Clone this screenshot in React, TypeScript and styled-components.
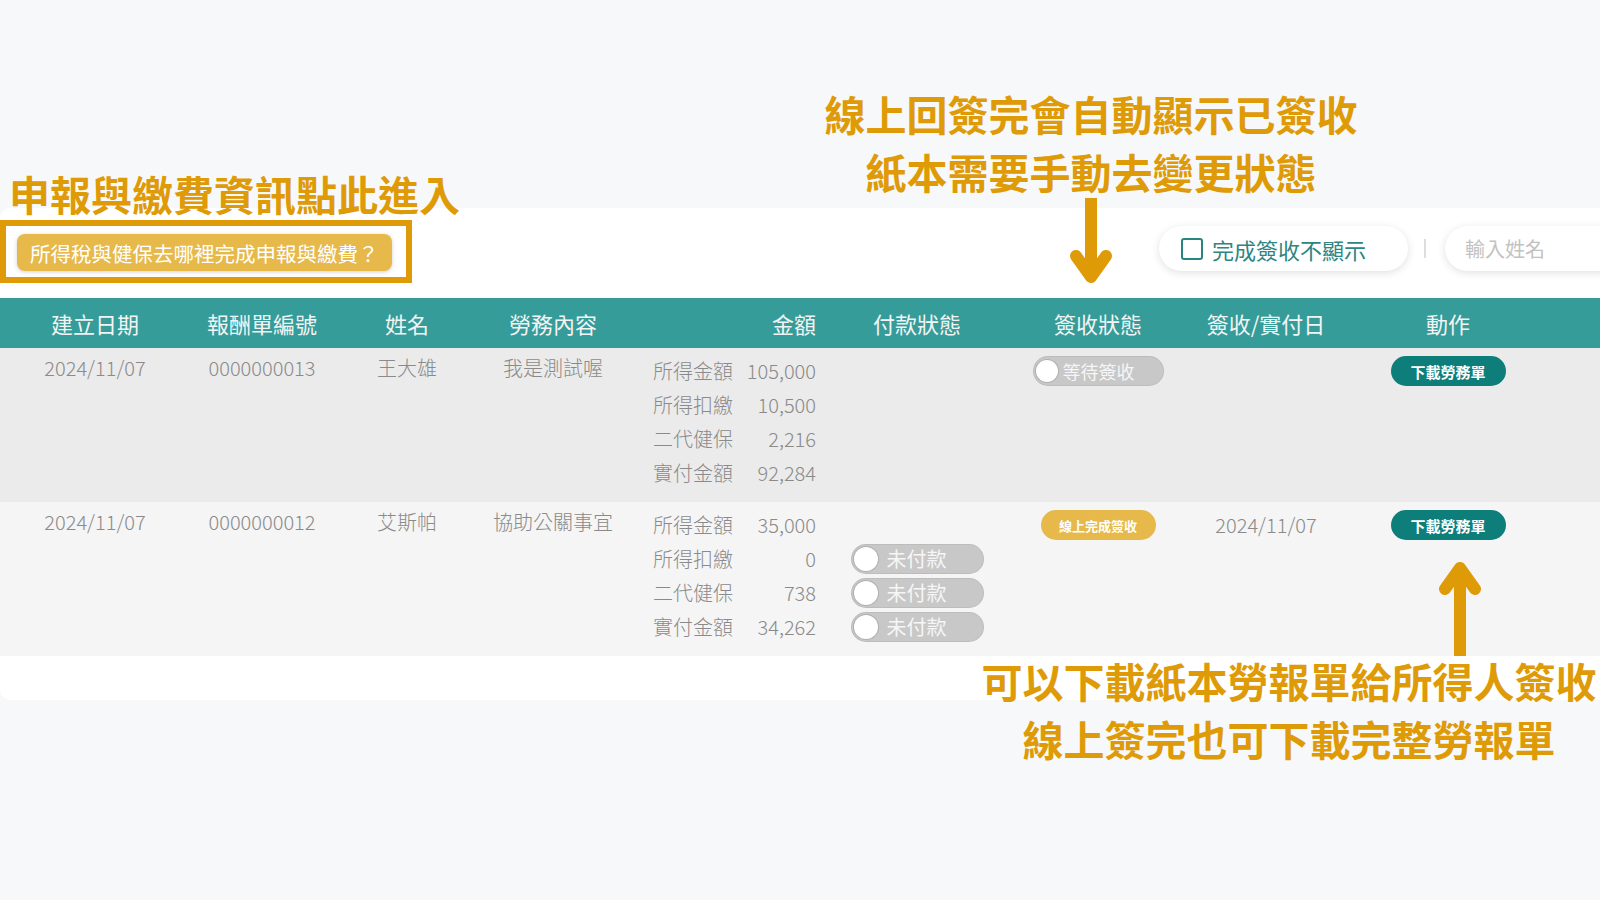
import React from "react";
import styled, { createGlobalStyle } from "styled-components";

const ORANGE = "#DE9B07";
const TEAL = "#369C99";
const DARK_TEAL = "#0D7E7A";
const GOLD = "#E6B94A";
const CJK = `"Noto Sans CJK TC", "Noto Sans", sans-serif`;

const GlobalStyle = createGlobalStyle`
  html, body { margin: 0; padding: 0; }
  body {
    background: #F7F8FA;
    font-family: ${CJK};
    overflow: hidden;
  }
`;

const Page = styled.div`
  position: relative;
  width: 1600px;
  height: 900px;
  overflow: hidden;
  padding-top: 208px;
  box-sizing: border-box;
`;

const Panel = styled.section`
  width: 1720px;
  background: #fff;
  border-radius: 10px 0 0 10px;
  padding-bottom: 44px;
`;

const TopBar = styled.div`
  display: flex;
  align-items: flex-start;
  height: 90px;
  padding: 0 15px 0 17px;
  box-sizing: border-box;
`;

const HelpWrap = styled.div`
  position: relative;
  margin-top: 26px;
  &::after {
    content: "";
    position: absolute;
    left: -17px;
    top: -14px;
    right: -20px;
    bottom: -12px;
    border: 6px solid ${ORANGE};
    pointer-events: none;
  }
`;

const HelpButton = styled.button`
  display: flex;
  align-items: center;
  width: 375px;
  height: 37px;
  padding: 0 0 0 13px;
  border: none;
  border-radius: 8px;
  background: ${GOLD};
  color: #fff;
  font-family: ${CJK};
  font-size: 20.5px;
  white-space: nowrap;
  box-shadow: 0 1px 4px rgba(0, 0, 0, 0.18);
  cursor: pointer;
`;

const RightGroup = styled.div`
  margin-left: auto;
  margin-top: 18px;
  display: flex;
  align-items: center;
`;

const CheckPill = styled.label`
  display: flex;
  align-items: center;
  gap: 9px;
  width: 249px;
  height: 45px;
  padding-left: 22px;
  box-sizing: border-box;
  border-radius: 23px;
  background: #fff;
  box-shadow: 0 2px 8px rgba(0, 0, 0, 0.12);
  color: #2E8581;
  font-size: 22px;
`;

const CheckBox = styled.span`
  width: 22px;
  height: 22px;
  border: 2px solid #2A8480;
  border-radius: 3px;
  box-sizing: border-box;
`;

const Divider = styled.span`
  width: 2px;
  height: 19px;
  background: #DDDDDD;
  margin: 0 19px 0 16px;
`;

const SearchInput = styled.input`
  width: 260px;
  height: 45px;
  padding: 0 20px;
  box-sizing: border-box;
  border: none;
  border-radius: 23px;
  background: #fff;
  box-shadow: 0 2px 8px rgba(0, 0, 0, 0.12);
  font-family: ${CJK};
  font-size: 20px;
  outline: none;
  &::placeholder { color: #C2C2C2; }
`;

const COLS = "190px 144px 146px 146px 206px 170px 192px 144px 220px 1fr";

const HeaderRow = styled.div`
  display: grid;
  grid-template-columns: ${COLS};
  align-items: center;
  height: 50px;
  background: ${TEAL};
  color: #F2F4F4;
  font-size: 22px;
`;

const HeadCell = styled.div<{ $right?: boolean }>`
  text-align: ${(p) => (p.$right ? "right" : "center")};
  padding-right: ${(p) => (p.$right ? "16px" : "0")};
`;

const Row = styled.div<{ $bg: string }>`
  display: grid;
  grid-template-columns: ${COLS};
  align-items: start;
  padding: 6px 0 12px;
  background: ${(p) => p.$bg};
  color: #8A8A8A;
  font-size: 20px;
  font-weight: 300;
  line-height: 34px;
`;

const Cell = styled.div<{ $raised?: boolean }>`
  text-align: center;
  margin-top: ${(p) => (p.$raised ? "-3px" : "0")};
`;

const AmountList = styled.div`
  display: grid;
  grid-template-columns: auto 1fr;
  column-gap: 8px;
  padding: 0 16px 0 27px;
`;

const AmountValue = styled.span`
  text-align: right;
`;

const Stack = styled.div`
  display: flex;
  flex-direction: column;
`;

const Slot = styled.div`
  height: 34px;
  display: flex;
  align-items: center;
  justify-content: center;
`;

const Toggle = styled.div<{ $w: number; $fs: number; $gap: number }>`
  display: flex;
  align-items: center;
  gap: ${(p) => p.$gap}px;
  width: ${(p) => p.$w}px;
  height: 30px;
  padding-left: 3px;
  box-sizing: border-box;
  border-radius: 15px;
  background: #C8C8C8;
  box-shadow: inset 0 0 0 1px rgba(0, 0, 0, 0.06);
  color: #F6F6F6;
  font-size: ${(p) => p.$fs}px;
  font-weight: 400;
  line-height: 1;
`;

const Knob = styled.span<{ $d: number }>`
  flex: none;
  width: ${(p) => p.$d}px;
  height: ${(p) => p.$d}px;
  border-radius: 50%;
  background: #fff;
  box-shadow: 0 0 0 1px rgba(0, 0, 0, 0.12);
`;

const Badge = styled.span<{ $bg: string; $fs: number }>`
  display: flex;
  align-items: center;
  justify-content: center;
  width: 115px;
  height: 30px;
  border-radius: 15px;
  background: ${(p) => p.$bg};
  color: #fff;
  font-size: ${(p) => p.$fs}px;
  font-weight: 700;
  line-height: 1;
`;

const Note = styled.div<{ $left: number; $top: number; $width: number; $center?: boolean }>`
  position: absolute;
  left: ${(p) => p.$left}px;
  top: ${(p) => p.$top}px;
  width: ${(p) => p.$width}px;
  text-align: ${(p) => (p.$center ? "center" : "left")};
  color: ${ORANGE};
  font-family: ${CJK};
  font-size: 41px;
  font-weight: 700;
  line-height: 57.5px;
  white-space: nowrap;
`;

const ArrowSvg = styled.svg<{ $left: number; $top: number }>`
  position: absolute;
  left: ${(p) => p.$left}px;
  top: ${(p) => p.$top}px;
  overflow: visible;
`;

function DownArrow() {
  return (
    <ArrowSvg $left={1060} $top={192} width="62" height="96" viewBox="0 0 62 96">
      <line x1="31" y1="6" x2="31" y2="85" stroke={ORANGE} strokeWidth="12" />
      <polyline points="16,64 31,85 46,64" fill="none" stroke={ORANGE} strokeWidth="12" strokeLinecap="round" strokeLinejoin="round" />
    </ArrowSvg>
  );
}

function UpArrow() {
  return (
    <ArrowSvg $left={1429} $top={556} width="62" height="104" viewBox="0 0 62 104">
      <line x1="31" y1="12" x2="31" y2="100" stroke={ORANGE} strokeWidth="12" />
      <polyline points="16,33 31,12 46,33" fill="none" stroke={ORANGE} strokeWidth="12" strokeLinecap="round" strokeLinejoin="round" />
    </ArrowSvg>
  );
}

type Amounts = [string, string][];

function AmountCell({ items }: { items: Amounts }) {
  return (
    <AmountList>
      {items.map(([label, value]) => (
        <React.Fragment key={label}>
          <span>{label}</span>
          <AmountValue>{value}</AmountValue>
        </React.Fragment>
      ))}
    </AmountList>
  );
}

function SwitchPill({ label, small }: { label: string; small?: boolean }) {
  return small ? (
    <Toggle $w={131} $fs={18} $gap={5}>
      <Knob $d={22} />
      {label}
    </Toggle>
  ) : (
    <Toggle $w={133} $fs={20} $gap={9}>
      <Knob $d={24} />
      {label}
    </Toggle>
  );
}

const headers = ["建立日期", "報酬單編號", "姓名", "勞務內容", "金額", "付款狀態", "簽收狀態", "簽收/實付日", "動作"];

export default function App() {
  return (
    <>
      <GlobalStyle />
      <Page>
        <Panel>
          <TopBar>
            <HelpWrap>
              <HelpButton>所得稅與健保去哪裡完成申報與繳費？</HelpButton>
            </HelpWrap>
            <RightGroup>
              <CheckPill>
                <CheckBox />
                完成簽收不顯示
              </CheckPill>
              <Divider />
              <SearchInput placeholder="輸入姓名" />
            </RightGroup>
          </TopBar>

          <HeaderRow>
            {headers.map((h) => (
              <HeadCell key={h} $right={h === "金額"}>
                {h}
              </HeadCell>
            ))}
            <span />
          </HeaderRow>

          <Row $bg="#EBEBEB">
            <Cell $raised>2024/11/07</Cell>
            <Cell $raised>0000000013</Cell>
            <Cell $raised>王大雄</Cell>
            <Cell $raised>我是測試喔</Cell>
            <AmountCell
              items={[
                ["所得金額", "105,000"],
                ["所得扣繳", "10,500"],
                ["二代健保", "2,216"],
                ["實付金額", "92,284"],
              ]}
            />
            <Cell />
            <Slot>
              <SwitchPill label="等待簽收" small />
            </Slot>
            <Cell />
            <Slot>
              <Badge $bg={DARK_TEAL} $fs={15}>下載勞務單</Badge>
            </Slot>
          </Row>

          <Row $bg="#F5F5F5">
            <Cell $raised>2024/11/07</Cell>
            <Cell $raised>0000000012</Cell>
            <Cell $raised>艾斯帕</Cell>
            <Cell $raised>協助公關事宜</Cell>
            <AmountCell
              items={[
                ["所得金額", "35,000"],
                ["所得扣繳", "0"],
                ["二代健保", "738"],
                ["實付金額", "34,262"],
              ]}
            />
            <Stack>
              <Slot />
              <Slot><SwitchPill label="未付款" /></Slot>
              <Slot><SwitchPill label="未付款" /></Slot>
              <Slot><SwitchPill label="未付款" /></Slot>
            </Stack>
            <Slot>
              <Badge $bg={GOLD} $fs={13}>線上完成簽收</Badge>
            </Slot>
            <Cell>2024/11/07</Cell>
            <Slot>
              <Badge $bg={DARK_TEAL} $fs={15}>下載勞務單</Badge>
            </Slot>
          </Row>
        </Panel>

        <Note $left={9} $top={165} $width={480}>申報與繳費資訊點此進入</Note>
        <Note $left={771} $top={85} $width={640} $center>
          線上回簽完會自動顯示已簽收
          <br />
          紙本需要手動去變更狀態
        </Note>
        <Note $left={959} $top={652} $width={660} $center>
          可以下載紙本勞報單給所得人簽收
          <br />
          線上簽完也可下載完整勞報單
        </Note>
        <DownArrow />
        <UpArrow />
      </Page>
    </>
  );
}
